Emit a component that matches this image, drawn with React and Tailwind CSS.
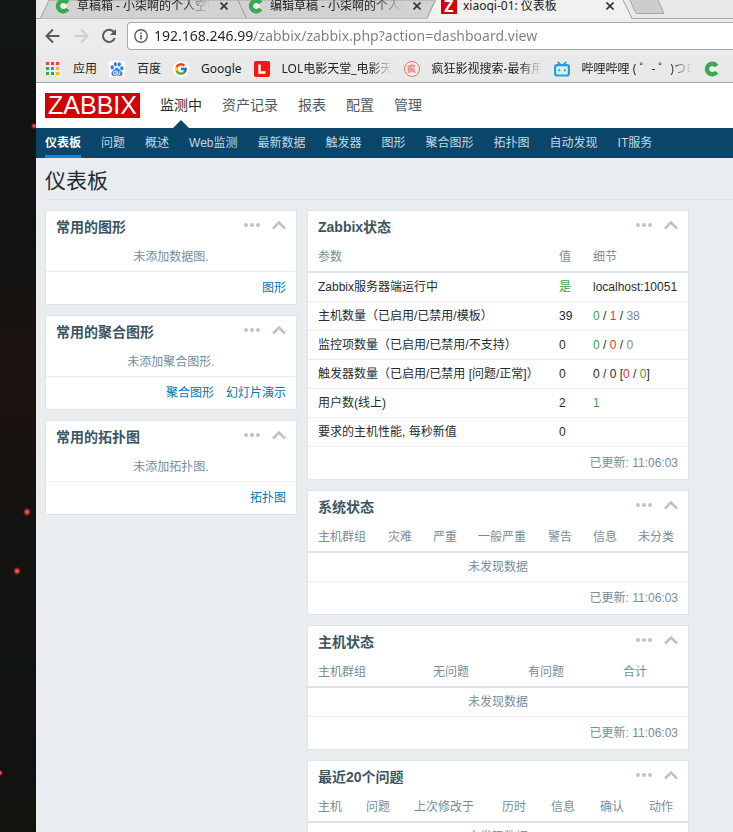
import React from "react";
import { SiBaidu } from "react-icons/si";
import { FcGoogle } from "react-icons/fc";

function CLogo() {
  return (
    <svg className="size-4 shrink-0" viewBox="0 0 16 16" aria-hidden="true">
      <circle cx="8" cy="8" r="4" fill="#eef3ef" />
      <path d="M12.6 5A5.3 5.3 0 1 0 12.6 11" fill="none" stroke="#36ab52" strokeWidth="4.4" />
    </svg>
  );
}

function BiliLogo() {
  return (
    <svg className="size-4" viewBox="0 0 16 16" fill="none" stroke="#17a3dc" strokeWidth="2.2" aria-hidden="true">
      <rect x="1.1" y="4.1" width="13.8" height="10.4" rx="2" />
      <path d="M3.8 0.8L6.4 3.6M12.2 0.8L9.6 3.6" strokeWidth="1.8" />
      <path d="M5.2 8.2V10.2M10.8 8.2V10.2" strokeWidth="1.8" />
    </svg>
  );
}

function CloseIcon() {
  return (
    <svg className="size-2" viewBox="0 0 8 8" aria-hidden="true">
      <path d="M0.5 0.5L7.5 7.5M7.5 0.5L0.5 7.5" stroke="#333" strokeWidth="1.6" fill="none" />
    </svg>
  );
}

function Tab({ icon, title, faded, className }) {
  return (
    <div className={`flex items-center ${className}`}>
      {icon}
      <span
        className={`ml-1.5 min-w-0 flex-1 overflow-hidden whitespace-nowrap ${
          faded ? "[mask-image:linear-gradient(to_right,#000_80%,transparent)]" : ""
        }`}
      >
        {title}
      </span>
      <button type="button" aria-label="关闭标签页" className="ml-2.5 shrink-0">
        <CloseIcon />
      </button>
    </div>
  );
}

function TabStrip() {
  return (
    <div className="relative h-[19px] overflow-hidden bg-[#d5d5d5] text-xs text-[#222]">
      <svg className="absolute left-0 top-0 h-[19px] w-[697px]" viewBox="0 0 697 19" aria-hidden="true">
        <path d="M0 0H697V18H0z" fill="#e9e9e9" />
        <path d="M0 18.5H697" stroke="#a5a5a5" />
        <path d="M4.5 18.5L13 0H202L210.5 18.5" fill="#d2d2d2" stroke="#a0a0a0" />
        <path d="M210.5 18.5L202 0H399L391 18.5" fill="#d2d2d2" stroke="#a0a0a0" />
        <path d="M391 19L399 0H587L596 19" fill="#f1f1f1" />
        <path d="M391 18.5L399.5 0M587 0L596 18.5" stroke="#a0a0a0" fill="none" />
        <path d="M594 0L599.5 12.5Q600 13.5 601 13.5H628L622 0" fill="#cdcdcd" stroke="#a8a8a8" />
      </svg>
      <div className="relative flex h-3 items-center pl-[19px]">
        <Tab className="w-[173px]" icon={<CLogo />} title="草稿箱 - 小柒啊的个人空间" faded />
        <Tab className="ml-5 w-[173px]" icon={<CLogo />} title="编辑草稿 - 小柒啊的个人空间" faded />
        <Tab
          className="ml-5 w-[173px]"
          icon={
            <span className="flex size-4 shrink-0 items-center justify-center bg-[#d40000] text-base font-bold leading-4 text-white">
              Z
            </span>
          }
          title="xiaoqi-01: 仪表板"
        />
      </div>
    </div>
  );
}

function Toolbar() {
  return (
    <form className="flex h-9 items-center bg-[#ececec] pb-0.5 pl-[9px]" onSubmit={(e) => e.preventDefault()}>
      <button type="button" aria-label="后退">
        <svg className="h-4 w-[15px]" viewBox="0 0 15 16" fill="none" stroke="#5a5a5a" strokeWidth="2">
          <path d="M14.5 8H1.5M8 1.5L1.5 8L8 14.5" />
        </svg>
      </button>
      <button type="button" aria-label="前进" className="ml-3.5">
        <svg className="h-4 w-[15px]" viewBox="0 0 15 16" fill="none" stroke="#cfcfcf" strokeWidth="2">
          <path d="M0.5 8H13.5M7 1.5L13.5 8L7 14.5" />
        </svg>
      </button>
      <button type="button" aria-label="重新加载" className="ml-3">
        <svg className="size-4" viewBox="0 0 16 16" fill="none" stroke="#5a5a5a" strokeWidth="2">
          <path d="M13.8 10A6.1 6.1 0 1 1 12.6 3.8" />
          <path d="M15 1V7H9z" fill="#5a5a5a" stroke="none" />
        </svg>
      </button>
      <div className="ml-2.5 flex h-7 min-w-0 flex-1 items-center rounded-l-sm border border-r-0 border-[#a9a9a9] bg-white pl-1.5">
        <svg className="size-3.5 shrink-0" viewBox="0 0 14 14" fill="none" stroke="#5a5a5a" strokeWidth="1.4" aria-hidden="true">
          <circle cx="7" cy="7" r="6.2" />
          <path d="M7 6V10.5M7 3.4V4.9" strokeWidth="1.6" />
        </svg>
        <input
          type="text"
          aria-label="地址"
          defaultValue="192.168.246.99/zabbix/zabbix.php?action=dashboard.view"
          className="ml-1.5 min-w-0 flex-1 bg-[linear-gradient(to_right,#222_100px,#7d7d7d_100px)] bg-clip-text text-sm leading-6 text-transparent outline-none"
        />
      </div>
    </form>
  );
}

function AppsIcon() {
  const colors = ["#ea4335", "#ea4335", "#ea4335", "#34a853", "#4285f4", "#fbbc05", "#34a853", "#34a853", "#fbbc05"];
  return (
    <svg className="h-4 w-[15px] shrink-0" viewBox="0 0 15 16" aria-hidden="true">
      {colors.map((c, i) => (
        <rect key={i} x={(i % 3) * 5} y={1 + Math.floor(i / 3) * 5} width="3" height="3" fill={c} />
      ))}
    </svg>
  );
}

const bookmarks = [
  { label: "应用", icon: <AppsIcon /> },
  {
    label: "百度",
    icon: (
      <span className="flex size-4 items-center justify-center bg-white">
        <SiBaidu className="size-3.5 text-[#2c7cf0]" />
      </span>
    ),
  },
  {
    label: "Google",
    icon: (
      <span className="flex size-4 items-center justify-center rounded-full bg-white">
        <FcGoogle className="size-3.5" />
      </span>
    ),
  },
  {
    label: "LOL电影天堂_电影天堂",
    faded: true,
    icon: (
      <svg className="size-4" viewBox="0 0 16 16" aria-hidden="true">
        <rect width="16" height="16" rx="2" fill="#fb1616" />
        <path d="M5.5 3.5V11.5H11.5" fill="none" stroke="#fff" strokeWidth="2.4" />
      </svg>
    ),
  },
  {
    label: "疯狂影视搜索-最有用的",
    faded: true,
    icon: (
      <span className="flex size-4 items-center justify-center rounded-full border border-[#e2785e] bg-[#f7ebe7] text-[9px] leading-none text-[#d9593b]">
        疯
      </span>
    ),
  },
  { label: "哔哩哔哩 ( ゜- ゜)つロ 干杯", faded: true, icon: <BiliLogo /> },
  { label: "", icon: <CLogo /> },
];

function Bookmarks() {
  return (
    <nav className="flex h-7 items-center gap-3 overflow-hidden border-b border-[#a9a9a9] bg-[#e9e9e9] pl-2.5 text-xs text-[#222]">
      {bookmarks.map((b, i) => (
        <a key={i} href="#" aria-label={b.label || "草稿箱"} className="flex shrink-0 items-center gap-3">
          <span className="shrink-0">{b.icon}</span>
          {b.label && (
            <span
              className={
                b.faded
                  ? "w-[110px] overflow-hidden whitespace-nowrap [mask-image:linear-gradient(to_right,#000_80%,transparent)]"
                  : "whitespace-nowrap"
              }
            >
              {b.label}
            </span>
          )}
        </a>
      ))}
    </nav>
  );
}

const menu = ["监测中", "资产记录", "报表", "配置", "管理"];
const subMenu = ["仪表板", "问题", "概述", "Web监测", "最新数据", "触发器", "图形", "聚合图形", "拓扑图", "自动发现", "IT服务"];

function Header() {
  return (
    <header>
      <div className="flex h-[45px] items-center bg-white pl-[9px]">
        <a href="#" className="flex h-[25px] w-[95px] items-center justify-center bg-[#d40000] text-[25px] leading-none text-white">
          ZABBIX
        </a>
        <nav className="ml-5 flex h-full gap-5 text-sm">
          {menu.map((m, i) => (
            <a
              key={m}
              href="#"
              className={`relative flex items-center whitespace-nowrap pb-0.5 ${i === 0 ? "text-[#1f2c33]" : "text-[#4c5b63]"}`}
            >
              {m}
              {i === 0 && (
                <svg className="absolute bottom-0 left-1/2 h-2 w-4 -translate-x-1/2" viewBox="0 0 16 8" aria-hidden="true">
                  <path d="M0 8L8 0L16 8z" fill="#0a466a" />
                </svg>
              )}
            </a>
          ))}
        </nav>
      </div>
      <nav className="flex h-[30px] gap-5 bg-[#0a466a] pl-[9px] text-xs">
        {subMenu.map((m, i) => (
          <a
            key={m}
            href="#"
            className={`flex items-center whitespace-nowrap border-y-3 border-transparent ${
              i === 0 ? "border-b-[#0f8ad3] font-bold text-white" : "text-[#c6d8e2]"
            }`}
          >
            {m}
          </a>
        ))}
      </nav>
    </header>
  );
}

function Widget({ title, children, footer }) {
  return (
    <section className="border border-[#dfe4e7] bg-white">
      <div className="flex h-[31px] items-center px-2.5">
        <h4 className="flex-1 text-sm font-bold text-[#3c5563]">{title}</h4>
        <div className="flex items-center gap-3 pb-1">
          <button type="button" aria-label="更多" className="flex">
            <svg className="h-1 w-4" viewBox="0 0 16 4" fill="#b8c4cc">
              <circle cx="2" cy="2" r="2" />
              <circle cx="8" cy="2" r="2" />
              <circle cx="14" cy="2" r="2" />
            </svg>
          </button>
          <button type="button" aria-label="折叠" className="flex">
            <svg className="h-2.5 w-3.5" viewBox="0 0 14 10" fill="none" stroke="#b8c4cc" strokeWidth="2.6">
              <path d="M1 8.5L7 2.5L13 8.5" />
            </svg>
          </button>
        </div>
      </div>
      {children}
      <div className="flex h-8 items-center justify-end gap-3 px-2.5 text-[#768d99]">{footer}</div>
    </section>
  );
}

function FavWidget({ title, empty, links }) {
  return (
    <Widget
      title={title}
      footer={links.map((l) => (
        <a key={l} href="#" className="text-[#0275b8]">
          {l}
        </a>
      ))}
    >
      <p className="flex h-[30px] items-center justify-center border-b border-[#ebeef0] text-[#768d99]">{empty}</p>
    </Widget>
  );
}

function DataTable({ cols, rows }) {
  return (
    <table className="w-full table-fixed border-separate border-spacing-0 text-left">
      <thead>
        <tr className="text-[#768d99]">
          {cols.map(([label, width]) => (
            <th
              key={label}
              className={`h-[31px] whitespace-nowrap border-b-2 border-[#dce2e5] py-0 pl-2.5 font-normal ${width}`}
            >
              {label}
            </th>
          ))}
        </tr>
      </thead>
      <tbody>
        {rows ? (
          rows.map((r, i) => (
            <tr key={i}>
              {r.map((c, j) => (
                <td key={j} className="h-[29px] whitespace-nowrap border-b border-[#ebeef0] py-0 pl-2.5">
                  {c}
                </td>
              ))}
            </tr>
          ))
        ) : (
          <tr>
            <td colSpan={cols.length} className="h-[29px] border-b border-[#ebeef0] py-0 text-center text-[#768d99]">
              未发现数据
            </td>
          </tr>
        )}
      </tbody>
    </table>
  );
}

const Green = ({ children }) => <span className="text-[#429e47]">{children}</span>;
const Red = ({ children }) => <span className="text-[#e33734]">{children}</span>;
const Grey = ({ children }) => <span className="text-[#768d99]">{children}</span>;

const statusRows = [
  ["Zabbix服务器端运行中", <Green>是</Green>, "localhost:10051"],
  ["主机数量（已启用/已禁用/模板）", "39", <><Green>0</Green> / <Red>1</Red> / <Grey>38</Grey></>],
  ["监控项数量（已启用/已禁用/不支持）", "0", <><Green>0</Green> / <Red>0</Red> / <Grey>0</Grey></>],
  ["触发器数量（已启用/已禁用 [问题/正常]）", "0", <>0 / 0 [<Red>0</Red> / <Green>0</Green>]</>],
  ["用户数(线上)", "2", <Green>1</Green>],
  ["要求的主机性能, 每秒新值", "0", ""],
];

const updated = "已更新: 11:06:03";

function Dashboard() {
  return (
    <main className="pl-[9px] text-xs text-[#1f2c33]">
      <h1 className="flex h-[42px] items-center border-b border-[#dfe4e7] pt-1 text-[21px] text-[#1f2c33]">仪表板</h1>
      <div className="mr-11 mt-2.5 flex items-start gap-2.5">
        <div className="flex w-[252px] shrink-0 flex-col gap-2.5">
          <FavWidget title="常用的图形" empty="未添加数据图." links={["图形"]} />
          <FavWidget title="常用的聚合图形" empty="未添加聚合图形." links={["聚合图形", "幻灯片演示"]} />
          <FavWidget title="常用的拓扑图" empty="未添加拓扑图." links={["拓扑图"]} />
        </div>
        <div className="flex min-w-0 flex-1 flex-col gap-2.5">
          <Widget title="Zabbix状态" footer={updated}>
            <DataTable cols={[["参数", ""], ["值", "w-[34px]"], ["细节", "w-[105px]"]]} rows={statusRows} />
          </Widget>
          <Widget title="系统状态" footer={updated}>
            <DataTable
              cols={[
                ["主机群组", "w-[70px]"],
                ["灾难", "w-[45px]"],
                ["严重", "w-[45px]"],
                ["一般严重", "w-[70px]"],
                ["警告", "w-[45px]"],
                ["信息", "w-[45px]"],
                ["未分类", ""],
              ]}
            />
          </Widget>
          <Widget title="主机状态" footer={updated}>
            <DataTable
              cols={[
                ["主机群组", "w-[115px]"],
                ["无问题", "w-[95px]"],
                ["有问题", "w-[95px]"],
                ["合计", ""],
              ]}
            />
          </Widget>
          <Widget title="最近20个问题" footer={updated}>
            <DataTable
              cols={[
                ["主机", "w-12"],
                ["问题", "w-12"],
                ["上次修改于", "w-[88px]"],
                ["历时", "w-[49px]"],
                ["信息", "w-[49px]"],
                ["确认", "w-[49px]"],
                ["动作", ""],
              ]}
            />
          </Widget>
        </div>
      </div>
    </main>
  );
}

function Wallpaper() {
  return (
    <div className="w-9 shrink-0 bg-[#11120f]">
      <svg className="h-full w-9" viewBox="0 0 36 832" preserveAspectRatio="xMidYMin slice" aria-hidden="true">
        <defs>
          <linearGradient id="sky" x1="0" y1="0" x2="0" y2="1">
            <stop offset="0" stopColor="#121614" />
            <stop offset="0.28" stopColor="#101310" />
            <stop offset="0.46" stopColor="#1d1211" />
            <stop offset="0.56" stopColor="#161210" />
            <stop offset="0.8" stopColor="#101411" />
            <stop offset="1" stopColor="#13120f" />
          </linearGradient>
          <radialGradient id="star">
            <stop offset="0" stopColor="#ff7a6a" />
            <stop offset="0.4" stopColor="#d83a30" />
            <stop offset="1" stopColor="#5a1010" stopOpacity="0" />
          </radialGradient>
        </defs>
        <rect width="36" height="832" fill="url(#sky)" />
        <circle cx="34" cy="126" r="3.5" fill="url(#star)" />
        <circle cx="27" cy="512" r="4.5" fill="url(#star)" />
        <circle cx="17" cy="571" r="4.5" fill="url(#star)" />
        <circle cx="0" cy="773" r="3.5" fill="url(#star)" />
      </svg>
    </div>
  );
}

export default function App() {
  return (
    <div className="flex h-screen overflow-hidden bg-[#e9edf0] font-['Liberation_Sans','Noto_Sans_CJK_SC',sans-serif]">
      <Wallpaper />
      <div className="min-w-0 flex-1 overflow-hidden">
        <div className="font-['Noto_Sans','Noto_Sans_CJK_SC',sans-serif]">
          <TabStrip />
          <Toolbar />
          <Bookmarks />
        </div>
        <Header />
        <Dashboard />
      </div>
    </div>
  );
}
